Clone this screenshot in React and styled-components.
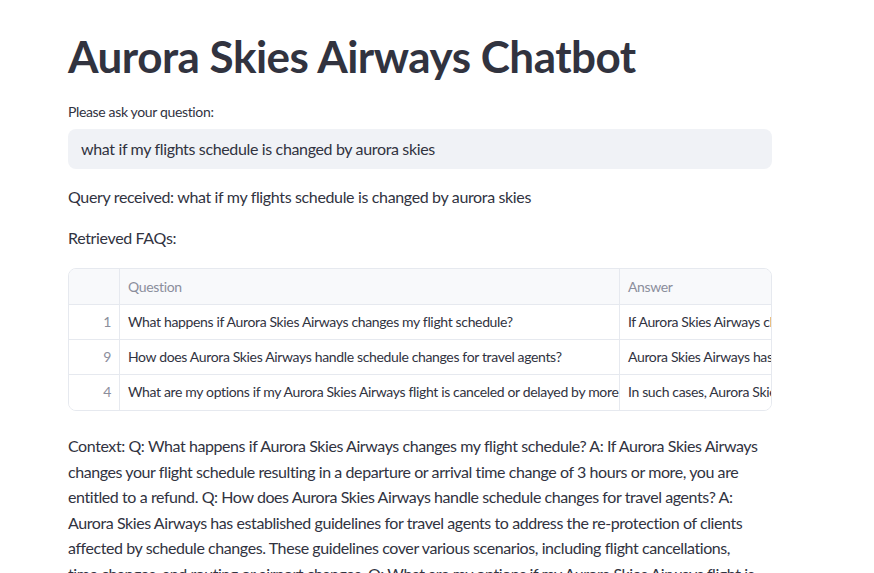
import React from 'react';
import styled, { createGlobalStyle } from 'styled-components';

const GlobalStyle = createGlobalStyle`
  html, body {
    margin: 0;
    padding: 0;
    background: #ffffff;
    overflow: hidden;
  }
  body {
    font-family: Lato, "Source Sans Pro", "Noto Sans", sans-serif;
    color: #31333f;
    letter-spacing: -0.35px;
  }
`;

const Main = styled.main`
  width: 704px;
  padding: 30px 0 0 68px;
`;

const Title = styled.h1`
  font-size: 44px;
  font-weight: 700;
  line-height: 1.2;
  margin: 0 0 19px;
  letter-spacing: -0.5px;
`;

const Label = styled.label`
  display: block;
  font-size: 14px;
  line-height: 20px;
  margin-bottom: 7px;
`;

const Input = styled.div`
  height: 40px;
  box-sizing: border-box;
  background: #f0f2f6;
  border-radius: 8px;
  padding: 0 13px;
  display: flex;
  align-items: center;
  font-size: 16px;
  margin-bottom: 15px;
`;

const Para = styled.p`
  font-size: 16px;
  line-height: 25.6px;
  margin: 0 0 ${(p) => p.$gap || 16}px;
`;

const Context = styled(Para)`
  letter-spacing: -0.42px;
  white-space: nowrap;
`;

const TableWrap = styled.div`
  border: 1px solid #e6e9ef;
  border-radius: 8px;
  overflow: hidden;
  margin: 0 0 22px;
`;

const Table = styled.div`
  display: grid;
  grid-template-columns: 51px 500px 500px;
  font-size: 14px;
`;

const Cell = styled.div`
  height: ${(p) => (p.$head ? 36 : 35)}px;
  box-sizing: border-box;
  padding: 0 8px;
  line-height: ${(p) => (p.$head ? 35 : 34)}px;
  white-space: nowrap;
  overflow: hidden;
  border-bottom: ${(p) => (p.$last ? 'none' : '1px solid #e6e9ef')};
  border-right: 1px solid #e6e9ef;
  background: ${(p) => (p.$head ? '#f8f9fb' : '#ffffff')};
  color: ${(p) => (p.$muted ? '#8b8e9c' : '#31333f')};
  text-align: ${(p) => (p.$index ? 'right' : 'left')};
`;

const rows = [
  {
    i: 1,
    q: 'What happens if Aurora Skies Airways changes my flight schedule?',
    a: 'If Aurora Skies Airways changes your flight schedule resulting in a departure or arrival time change of 3 hours or more',
  },
  {
    i: 9,
    q: 'How does Aurora Skies Airways handle schedule changes for travel agents?',
    a: 'Aurora Skies Airways has established guidelines for travel agents to address the re-protection of clients',
  },
  {
    i: 4,
    q: 'What are my options if my Aurora Skies Airways flight is canceled or delayed by more than 3 hours?',
    a: 'In such cases, Aurora Skies Airways will offer you alternative options',
  },
];

const contextLines = [
  'Context: Q: What happens if Aurora Skies Airways changes my flight schedule? A: If Aurora Skies Airways',
  'changes your flight schedule resulting in a departure or arrival time change of 3 hours or more, you are',
  'entitled to a refund. Q: How does Aurora Skies Airways handle schedule changes for travel agents? A:',
  'Aurora Skies Airways has established guidelines for travel agents to address the re-protection of clients',
  'affected by schedule changes. These guidelines cover various scenarios, including flight cancellations,',
  'time changes, and routing or airport changes. Q: What are my options if my Aurora Skies Airways flight is',
  'canceled or delayed by more than 3 hours?',
];

export default function App() {
  return (
    <>
      <GlobalStyle />
      <Main>
        <Title>Aurora Skies Airways Chatbot</Title>
        <Label>Please ask your question:</Label>
        <Input>what if my flights schedule is changed by aurora skies</Input>
        <Para>Query received: what if my flights schedule is changed by aurora skies</Para>
        <Para $gap={17}>Retrieved FAQs:</Para>
        <TableWrap>
          <Table>
            <Cell $head />
            <Cell $head $muted>Question</Cell>
            <Cell $head $muted>Answer</Cell>
            {rows.map((r, n) => (
              <React.Fragment key={r.i}>
                <Cell $index $muted $last={n === rows.length - 1}>{r.i}</Cell>
                <Cell $last={n === rows.length - 1}>{r.q}</Cell>
                <Cell $last={n === rows.length - 1}>{r.a}</Cell>
              </React.Fragment>
            ))}
          </Table>
        </TableWrap>
        <Context>
          {contextLines.map((line, n) => (
            <React.Fragment key={n}>
              {line}
              {n < contextLines.length - 1 && <br />}
            </React.Fragment>
          ))}
        </Context>
      </Main>
    </>
  );
}
